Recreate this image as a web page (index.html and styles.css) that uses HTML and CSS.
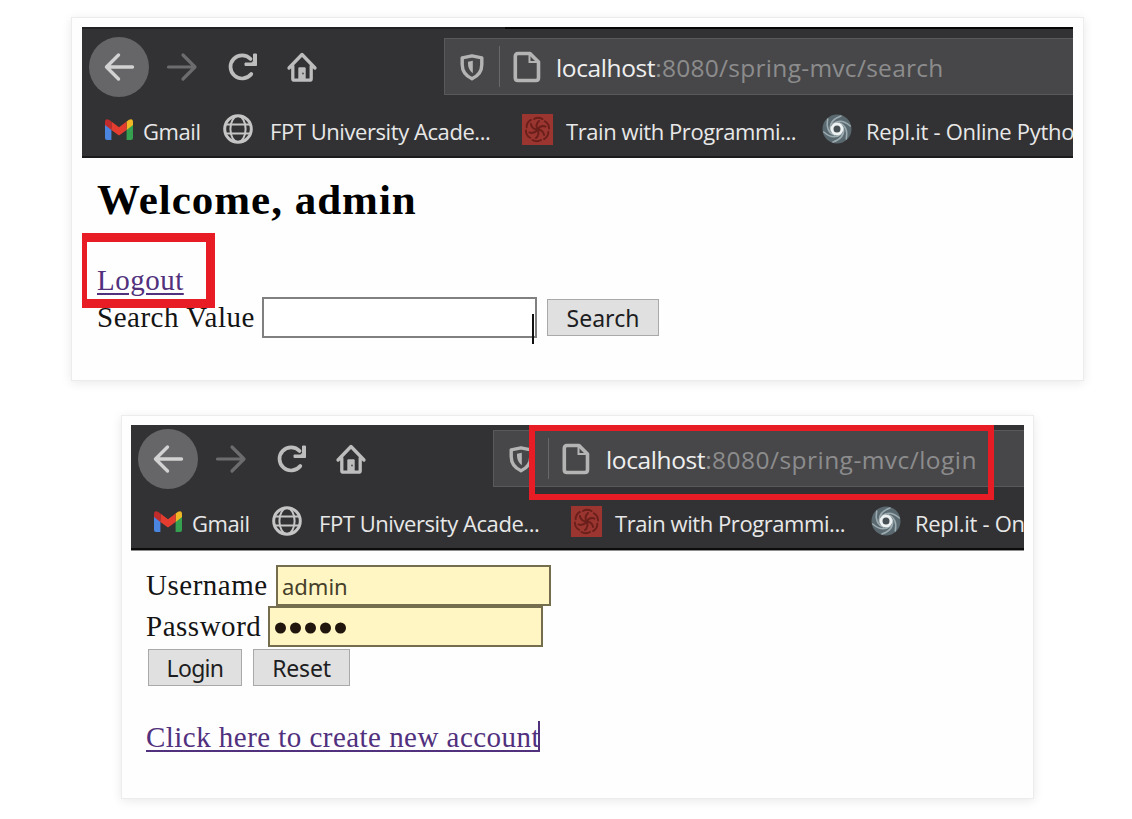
FILE: index.html
```
<!DOCTYPE html>
<html lang="en">
<head>
<meta charset="utf-8">
<title>Spring MVC login and search</title>
<link rel="stylesheet" href="styles.css">
</head>
<body>
<svg class="defs" width="0" height="0">
  <symbol id="back" viewBox="0 0 32 32"><path d="M29.500 16H3.500M15.500 4 3.500 16l12 12" fill="none" stroke="currentColor" stroke-width="3.4" stroke-linecap="round" stroke-linejoin="round"/></symbol>
  <symbol id="forward" viewBox="0 0 32 32"><path d="M2.500 16h26M17 4l12 12-12 12" fill="none" stroke="currentColor" stroke-width="3.2" stroke-linecap="round" stroke-linejoin="round"/></symbol>
  <symbol id="reload" viewBox="0 0 32 32"><path d="M24.300 23A11.600 11.600 0 1 1 23.600 8" fill="none" stroke="currentColor" stroke-width="3.700" stroke-linecap="round"/><path d="M29.500 3v11.500H18v-2.500h6.500l2-2V3z" fill="currentColor" stroke="currentColor" stroke-width="1" stroke-linejoin="round"/></symbol>
  <symbol id="home" viewBox="0 0 32 32"><path d="M3 17 16 3.500 29 17M6.800 15v12.700q0 1.500 1.500 1.500h15.400q1.500 0 1.500-1.500V15" fill="none" stroke="currentColor" stroke-width="3.300" stroke-linecap="round" stroke-linejoin="round"/><path d="M12.300 29V17.500q0-1.200 1.200-1.200h5q1.200 0 1.200 1.200V29z" fill="currentColor"/><circle cx="17" cy="22.500" r="1" fill="#555"/></symbol>
  <symbol id="shield" viewBox="0 0 24 28"><path d="M12 2.800 21.800 4.800v6.600c0 6.800-3.800 11.500-9.800 14.300C6 22.900 2.200 18.200 2.200 11.400V4.800z" fill="none" stroke="currentColor" stroke-width="3.400" stroke-linejoin="round"/><path d="M12.800 7.800v12.400C9.500 18 8 14.500 8 11V8.800z" fill="currentColor"/></symbol>
  <symbol id="doc" viewBox="0 0 28 32"><path d="M5 2.500h12L25.500 11v15.800q0 2.700-2.700 2.700H5q-2.700 0-2.700-2.700V5.200Q2.300 2.500 5 2.500z" fill="none" stroke="currentColor" stroke-width="3.600" stroke-linejoin="round"/><path d="M16.500 2.500V11h9" fill="none" stroke="currentColor" stroke-width="2"/></symbol>
  <symbol id="gmail" viewBox="0 0 28 21"><path d="M0 4.500 6.400 9v12H2q-2 0-2-2z" fill="#4a86e0"/><path d="M28 4.500 21.600 9v12H26q2 0 2-2z" fill="#35a04f"/><path d="M21.600 2.500 24 .8Q28-1 28 3.500V6l-6.400 5z" fill="#f0b824"/><path d="M6.400 2.500 14 8.200l7.600-5.700V11L14 16.500 6.400 11z" fill="#e43d30"/><path d="M0 6V3.500Q0-1 4 .800l2.400 1.700V11z" fill="#c02c2b"/></symbol>
  <symbol id="globe" viewBox="0 0 30 30"><g fill="none" stroke="currentColor"><circle cx="15" cy="15" r="13.300" stroke-width="3"/><ellipse cx="15" cy="15" rx="7.600" ry="13" stroke-width="2"/><path d="M2 10.500h26M2 19.500h26" stroke-width="2"/></g></symbol>
  <symbol id="codewars" viewBox="0 0 31 31"><path fill="#9a3530" d="M0 0h31v31H0z"/><g fill="none" stroke="#6a1f1b" stroke-width="1.900" stroke-linecap="round"><g id="arm"><path d="M15.500 15.500q-2.500-5 1.500-8.500M12 5q4-2.500 8.500 0"/></g><use href="#arm" transform="rotate(60 15.500 15.500)"/><use href="#arm" transform="rotate(120 15.500 15.500)"/><use href="#arm" transform="rotate(180 15.500 15.500)"/><use href="#arm" transform="rotate(240 15.500 15.500)"/><use href="#arm" transform="rotate(300 15.500 15.500)"/></g></symbol>
  <symbol id="replit" viewBox="0 0 30 30"><circle cx="15" cy="15" r="14.500" fill="#5a696f"/><g fill="none" stroke="#9dacb1" stroke-width="1.500" stroke-linecap="round"><g id="swirl"><path d="M8.500 16Q7 6 19 2"/></g><use href="#swirl" transform="rotate(60 15 15)"/><use href="#swirl" transform="rotate(120 15 15)"/><use href="#swirl" transform="rotate(180 15 15)"/><use href="#swirl" transform="rotate(240 15 15)"/><use href="#swirl" transform="rotate(300 15 15)"/></g><circle cx="15" cy="15" r="5" fill="#465054" stroke="#edf1f1" stroke-width="3"/></symbol>
</svg>

<main class="shots">
  <section class="card card-search">
    <div class="shot">
      <header class="chrome">
        <div class="toolbar">
          <span class="back"><svg class="i-nav"><use href="#back"/></svg></span>
          <svg class="i-nav forward"><use href="#forward"/></svg>
          <svg class="i-nav reload"><use href="#reload"/></svg>
          <svg class="i-nav home"><use href="#home"/></svg>
          <div class="urlbar">
            <svg class="i-shield"><use href="#shield"/></svg>
            <span class="divider"></span>
            <svg class="i-doc"><use href="#doc"/></svg>
            <span class="url"><span class="host">localhost</span>:8080/spring-mvc/search</span>
          </div>
        </div>
        <nav class="bookmarks">
          <svg class="i-gmail"><use href="#gmail"/></svg><span class="bm bm-gmail">Gmail</span>
          <svg class="i-globe"><use href="#globe"/></svg><span class="bm bm-fpt">FPT University Acade...</span>
          <svg class="i-train"><use href="#codewars"/></svg><span class="bm bm-train">Train with Programmi...</span>
          <svg class="i-replit"><use href="#replit"/></svg><span class="bm bm-replit">Repl.it - Online Pytho</span>
        </nav>
      </header>
      <div class="page">
        <h1 class="welcome">Welcome, admin</h1>
        <div class="logout-line"><a class="link logout" href="#">Logout</a><span class="mark mark-logout"></span></div>
        <div class="row"><span class="label label-search">Search Value</span><span class="field"><span class="caret"></span></span><button class="btn btn-search">Search</button></div>
      </div>
    </div>
  </section>

  <section class="card card-login">
    <div class="shot">
      <header class="chrome chrome-cut">
        <div class="toolbar">
          <span class="back"><svg class="i-nav"><use href="#back"/></svg></span>
          <svg class="i-nav forward"><use href="#forward"/></svg>
          <svg class="i-nav reload"><use href="#reload"/></svg>
          <svg class="i-nav home"><use href="#home"/></svg>
          <div class="urlbar">
            <svg class="i-shield"><use href="#shield"/></svg>
            <span class="divider"></span>
            <svg class="i-doc"><use href="#doc"/></svg>
            <span class="url url-login"><span class="host">localhost</span>:8080/spring-mvc/login</span>
          </div>
        </div>
        <nav class="bookmarks">
          <svg class="i-gmail"><use href="#gmail"/></svg><span class="bm bm-gmail">Gmail</span>
          <svg class="i-globe"><use href="#globe"/></svg><span class="bm bm-fpt">FPT University Acade...</span>
          <svg class="i-train"><use href="#codewars"/></svg><span class="bm bm-train">Train with Programmi...</span>
          <svg class="i-replit"><use href="#replit"/></svg><span class="bm bm-replit">Repl.it - On</span>
        </nav>
        <span class="mark mark-url"></span>
      </header>
      <div class="page page-login">
        <div class="row"><span class="label label-user">Username</span><span class="field filled">admin</span></div>
        <div class="row"><span class="label label-pass">Password</span><span class="field filled"><svg class="dots" viewBox="0 0 74 12"><circle cx="6.500" cy="6" r="5.500"/><circle cx="21.500" cy="6" r="5.500"/><circle cx="36.500" cy="6" r="5.500"/><circle cx="51.500" cy="6" r="5.500"/><circle cx="66.500" cy="6" r="5.500"/></svg></span></div>
        <div class="buttons"><button class="btn btn-login">Login</button><button class="btn btn-reset">Reset</button></div>
        <div class="create-line"><a class="link create" href="#">Click here to create new account</a><span class="link-caret"></span></div>
      </div>
    </div>
  </section>
</main>
</body>
</html>
```
FILE: styles.css
```
* { box-sizing: border-box; }
body { margin: 0; background: #fff; overflow: hidden; }
.defs { position: absolute; }
svg { display: block; flex: none; }

.shots { display: flex; flex-direction: column; align-items: center; gap: 34px; padding: 17px 0 20px 23px; }
.card { border: 1px solid #ececec; background: #fefefe; box-shadow: 0 2px 10px rgba(0, 0, 0, .09); }
.card-search { width: 1013px; height: 364px; padding: 9px 10px; }
.card-login { width: 913px; height: 384px; padding: 9px; }
.shot { height: 100%; overflow: hidden; }

.chrome { position: relative; height: 131px; padding-top: 11px; background: linear-gradient(90deg, #222224 423px, #070708 423px) 0 0 / 100% 2px no-repeat #323234; border-bottom: 2px solid #1b1b1d; overflow: hidden; color: #bdbdbe; }
.chrome-cut { height: 126px; padding-top: 5px; background: #323234; border-bottom: 1px solid #8d8d8e; box-shadow: inset 0 -2px #0c0c0d; }
.toolbar { display: flex; align-items: center; height: 57px; padding-left: 7px; }
.back { display: flex; align-items: center; justify-content: center; flex: none; width: 60px; height: 60px; border-radius: 50%; background: #666668; color: #d2d2d2; }
.i-nav { width: 32px; height: 32px; }
.forward { margin-left: 17px; color: #6c6c6e; }
.reload { margin-left: 29px; }
.home { margin-left: 27px; }
.urlbar { display: flex; align-items: center; flex: 1; height: 57px; margin-left: 126px; padding-left: 15px; background: #474749; border: 1px solid #59595b; border-right: 0; color: #b4b4b5; }
.i-shield { width: 24px; height: 28px; }
.divider { flex: none; width: 1px; height: 41px; margin: 0 13px 0 15px; background: #68686a; }
.i-doc { width: 28px; height: 32px; }
.url { margin: 3px 0 0 15px; font: 24.5px/32px "Open Sans", sans-serif; letter-spacing: .28px; color: #8c8c8d; white-space: nowrap; }
.url-login { margin-left: 16px; letter-spacing: .46px; }
.host { letter-spacing: -.38px; color: #efefef; }

.bookmarks { display: flex; align-items: center; height: 60px; padding: 8px 0 0 23px; color: #c5c5c6; }
.bm { flex: none; margin-top: 3px; font: 22px/28px "Open Sans", sans-serif; letter-spacing: -.43px; color: #e8e8e8; white-space: nowrap; }
.i-gmail { width: 28px; height: 21px; margin-right: 10px; }
.i-globe, .i-replit { width: 30px; height: 30px; }
.i-train { width: 31px; height: 31px; }
.bm-gmail { width: 80px; }
.bm-fpt { width: 252px; margin-left: 17px; }
.bm-train { width: 256px; margin-left: 13px; }
.bm-replit { margin-left: 14px; letter-spacing: -.3px; }

.page { padding: 17px 0 0 15px; font-family: "Liberation Serif", serif; color: #141414; }
.page-login { padding-top: 14px; }
.welcome { margin: 0 0 37px; font-size: 43px; line-height: 50px; letter-spacing: 1px; color: #000; }
.logout-line { position: relative; height: 35px; }
.link { font-size: 29px; line-height: 37px; letter-spacing: .5px; color: #51307d; text-decoration: underline; text-decoration-thickness: 2px; text-underline-offset: 3px; white-space: nowrap; }
.mark { position: absolute; border: 9px solid #e81c24; }
.mark-logout { left: -15px; top: -29px; width: 133px; height: 75px; border-left-width: 5px; }
.mark-url { left: 398px; top: 0; width: 465px; height: 75px; border-width: 6px; }
.row { display: flex; align-items: center; height: 41px; }
.label { flex: none; font-size: 29px; line-height: 37px; letter-spacing: .52px; white-space: nowrap; }
.label-search { width: 165px; }
.label-user { width: 130px; }
.label-pass { width: 122px; }
.field { position: relative; display: flex; align-items: center; flex: none; width: 275px; height: 41px; border: 2px solid #808080; background: #fff; font: 22px/28px "Noto Sans", sans-serif; color: #46402b; }
.filled { padding-left: 4px; background: #fff6c3; border-color: #746e4e; }
.dots { width: 74px; height: 12px; margin-top: 2px; fill: #20160d; }
.caret { position: absolute; left: 268px; top: 15px; width: 2px; height: 30px; background: #111; }
.btn { height: 37px; padding: 0; border: 1px solid #a9a9a9; border-radius: 0; background: #e0e0e0; font: 23px/30px "Noto Sans", sans-serif; color: #1d1d22; }
.btn-search { width: 112px; margin-left: 10px; }
.buttons { display: flex; gap: 11px; padding: 2px 0 0 2px; }
.btn-login { width: 94px; letter-spacing: -.7px; }
.btn-reset { width: 97px; letter-spacing: -.2px; }
.create-line { display: flex; margin-top: 33px; }
.create { letter-spacing: .46px; }
.link-caret { width: 2px; height: 31px; margin-top: 2px; margin-left: -2px; background: #51307d; }
```
